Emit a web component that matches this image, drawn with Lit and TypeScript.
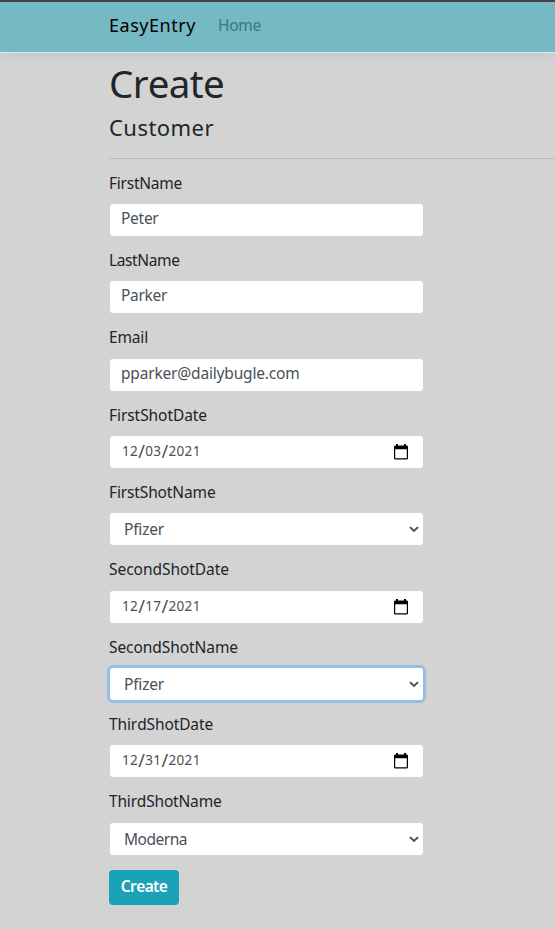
import { LitElement, html, css, svg } from "lit";
import { customElement, property } from "lit/decorators.js";

const FAMILY = '"Noto Sans", sans-serif';
const pen = document.createElement("canvas").getContext("2d")!;

/** Text whose tracking is computed so that it spans a given width. */
@customElement("fit-text")
class FitText extends LitElement {
  @property() text = "";
  @property({ type: Number }) span = 100;
  @property({ type: Number }) size = 15.5;
  @property({ type: Number }) weight = 400;
  static styles = css`
    :host { display: inline-block; white-space: pre; font-kerning: none; font-variant-ligatures: none; }
  `;
  render() {
    pen.font = `${this.weight} ${this.size}px ${FAMILY}`;
    pen.fontKerning = "none";
    const gap = (this.span - pen.measureText(this.text).width) / this.text.length;
    return html`<span style="font-family:${FAMILY.replace(/"/g, "'")};font-size:${this.size}px;font-weight:${this.weight};letter-spacing:${gap.toFixed(3)}px">${this.text}</span>`;
  }
}

type Field = { label: string; lw: number; value: string; vw: number; kind: "text" | "date" | "select"; focus?: boolean };

const FIELDS: Field[] = [
  { label: "FirstName", lw: 73, value: "Peter", vw: 37.5, kind: "text" },
  { label: "LastName", lw: 70.5, value: "Parker", vw: 46, kind: "text" },
  { label: "Email", lw: 39, value: "pparker@dailybugle.com", vw: 178.5, kind: "text" },
  { label: "FirstShotDate", lw: 98, value: "12/03/2021", vw: 79, kind: "date" },
  { label: "FirstShotName", lw: 106.5, value: "Pfizer", vw: 40, kind: "select" },
  { label: "SecondShotDate", lw: 120, value: "12/17/2021", vw: 79, kind: "date" },
  { label: "SecondShotName", lw: 129, value: "Pfizer", vw: 40, kind: "select", focus: true },
  { label: "ThirdShotDate", lw: 104, value: "12/31/2021", vw: 79, kind: "date" },
  { label: "ThirdShotName", lw: 112.5, value: "Moderna", vw: 63, kind: "select" },
];

const calendar = html`<svg width="14" height="16" viewBox="0 0 14 16">
  ${svg`<path fill="#000" fill-rule="evenodd" d="M2 0h2v1.5h6V0h2v1.5h.6q1.4 0 1.4 1.3v11.4q0 1.3-1.4 1.3H1.4Q0 15.5 0 14.2V2.8Q0 1.5 1.4 1.5H2zM1.2 5.3v9h11.6v-9z"/>`}
</svg>`;
const chevron = html`<svg width="10" height="7" viewBox="0 0 10 7">
  <path d="M1 1.1 5 4.9 9 1.1" fill="none" stroke="#495057" stroke-width="2"/>
</svg>`;

@customElement("app-root")
class AppRoot extends LitElement {
  static styles = css`
    :host { display: block; height: 929px; overflow: hidden; background: #d3d3d3; color: #212529; }
    * { box-sizing: border-box; }
    svg { display: block; }
    nav { height: 53px; padding: 0 0 3px 109px; display: flex; align-items: center; gap: 22px;
      background: #75b9c4; border-top: 2px solid #45434b; border-bottom: 1px solid #dcebed;
      box-shadow: 0 3px 10px rgba(0, 0, 0, 0.06); line-height: 30px; }
    .brand { color: #000; padding-top: 1px; }
    .link { color: #3f757e; }
    main { padding-left: 109px; }
    h1, h2 { margin: 0; font-weight: 400; display: flex; }
    h1 { height: 61px; line-height: 60px; }
    h2 { height: 44px; line-height: 27px; }
    .rule { height: 1px; background: #bababa; }
    form { padding-top: 12.5px; width: 315px; }
    .field { height: 77.36px; }
    label { display: flex; height: 32.3px; line-height: 23px; }
    .control { height: 32px; margin: 0 1px; padding: 0 15px 0 11px; border-radius: 3px; background: #fff;
      color: #495057; display: flex; align-items: center; justify-content: space-between; line-height: 28px; }
    .text, .date { padding-bottom: 3px; }
    .date { padding-left: 12px; }
    .date svg { margin-top: 3px; }
    .parts { display: flex; align-items: flex-start; padding-top: 3px; }
    .select { padding: 1px 4px 0 14px; }
    .focus { box-shadow: 0 0 0 3px #98bde5; }
    button { border: 0; margin: 2px 0 0; padding: 0 0 1px; width: 70px; height: 35px; border-radius: 4px;
      background: #19a2b8; color: #fff; display: flex; align-items: center; justify-content: center; line-height: 28px; }
  `;

  date(value: string) {
    return html`<div class="parts">${value.split(/(\/)/).map((p) =>
      p === "/"
        ? html`<fit-text .text=${p} .span=${7} .size=${18}></fit-text>`
        : html`<fit-text .text=${p} .span=${p.length * 8.1} .size=${13.5}></fit-text>`)}</div>`;
  }

  field(f: Field) {
    return html`<div class="field">
      <label><fit-text .text=${f.label} .span=${f.lw}></fit-text></label>
      <div class="control ${f.kind} ${f.focus ? "focus" : ""}">
        ${f.kind === "date" ? this.date(f.value) : html`<fit-text .text=${f.value} .span=${f.vw}></fit-text>`}
        ${f.kind === "date" ? calendar : f.kind === "select" ? chevron : ""}
      </div>
    </div>`;
  }

  render() {
    return html`
      <nav>
        <fit-text class="brand" text="EasyEntry" .span=${87} .size=${18}></fit-text>
        <fit-text class="link" text="Home" .span=${43} .size=${15.5}></fit-text>
      </nav>
      <main>
        <h1><fit-text text="Create" .span=${115} .size=${38.5}></fit-text></h1>
        <h2><fit-text text="Customer" .span=${105} .size=${22}></fit-text></h2>
        <div class="rule"></div>
        <form>
          ${FIELDS.map((f) => this.field(f))}
          <button type="button"><fit-text text="Create" .span=${46.5} .size=${15.5} .weight=${600}></fit-text></button>
        </form>
      </main>`;
  }
}
